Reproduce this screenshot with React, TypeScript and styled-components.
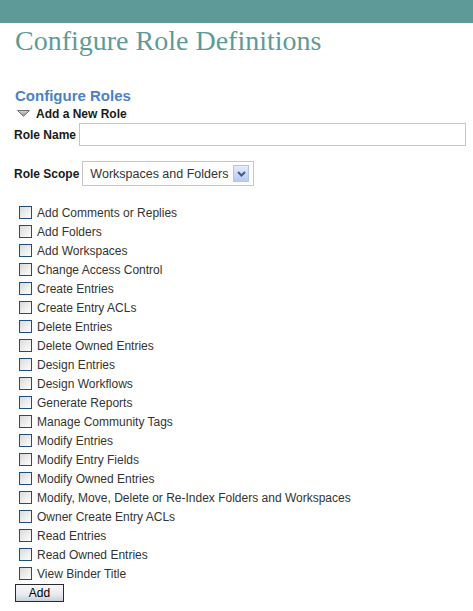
import React from "react";
import styled, { createGlobalStyle } from "styled-components";

const Global = createGlobalStyle`
  html, body { margin: 0; padding: 0; background: #ffffff; }
  body { font-family: "Liberation Sans", Arial, sans-serif; }
`;

const TopBar = styled.div`
  height: 23px;
  background: #5e9b98;
`;

const Content = styled.div`
  padding: 0 7px 0 14px;
`;

const Title = styled.h1`
  margin: 2px 0 0 1px;
  font-family: "Liberation Serif", "Times New Roman", serif;
  font-weight: normal;
  font-size: 28px;
  line-height: 32px;
  color: #5e9b98;
`;

const SectionTitle = styled.h2`
  margin: 29px 0 0 1px;
  font-size: 15px;
  line-height: 20px;
  font-weight: bold;
  color: #4a82c4;
`;

const Toggle = styled.div`
  display: flex;
  align-items: center;
  gap: 6px;
  margin-left: 3px;
  height: 15px;
  font-size: 12px;
  font-weight: bold;
  color: #1a1a1a;
`;

const FieldRow = styled.div<{ $top: number }>`
  display: flex;
  align-items: center;
  gap: 3px;
  margin-top: ${(p) => p.$top}px;
`;

const Label = styled.label`
  font-size: 12px;
  font-weight: bold;
  color: #1a1a1a;
  white-space: nowrap;
`;

const TextInput = styled.input`
  flex: 1;
  box-sizing: border-box;
  height: 23px;
  margin: 0;
  border: 1px solid #c6c6c6;
  padding: 0 4px;
  font-family: "Liberation Sans", Arial, sans-serif;
  font-size: 12px;
  outline: none;
`;

const SelectBox = styled.div`
  box-sizing: border-box;
  width: 172px;
  height: 25px;
  border: 1px solid #c6c6c6;
  display: flex;
  align-items: center;
  justify-content: space-between;
  padding: 0 4px 0 7px;
  font-size: 12.5px;
  color: #333333;
  background: #ffffff;
`;

const ArrowButton = styled.span`
  box-sizing: border-box;
  width: 16px;
  height: 17px;
  border: 1px solid #b3c4ea;
  background: linear-gradient(#e4ecfc, #b6caf4);
  display: flex;
  align-items: center;
  justify-content: center;
`;

const List = styled.div`
  margin-top: 17px;
  display: flex;
  flex-direction: column;
`;

const CheckRow = styled.label`
  display: flex;
  align-items: center;
  gap: 5px;
  height: 19px;
  padding-left: 5px;
  font-size: 12px;
  color: #333333;
  white-space: nowrap;
`;

const Box = styled.span`
  box-sizing: border-box;
  width: 13px;
  height: 13px;
  border: 1px solid #1e4f7f;
  background: linear-gradient(135deg, #d9d9d9 0%, #f0f0f0 60%, #fcfcfc 100%);
  flex: none;
`;

const AddButton = styled.button`
  box-sizing: border-box;
  margin: -1px 0 0 1px;
  width: 49px;
  height: 18px;
  padding: 0;
  border: 1px solid #2a2a2a;
  background: linear-gradient(#f7f8fb, #e6eaf0 60%, #c9d0da);
  font-family: "Liberation Sans", Arial, sans-serif;
  font-size: 12px;
  color: #000000;
  line-height: 16px;
`;

const permissions = [
  "Add Comments or Replies",
  "Add Folders",
  "Add Workspaces",
  "Change Access Control",
  "Create Entries",
  "Create Entry ACLs",
  "Delete Entries",
  "Delete Owned Entries",
  "Design Entries",
  "Design Workflows",
  "Generate Reports",
  "Manage Community Tags",
  "Modify Entries",
  "Modify Entry Fields",
  "Modify Owned Entries",
  "Modify, Move, Delete or Re-Index Folders and Workspaces",
  "Owner Create Entry ACLs",
  "Read Entries",
  "Read Owned Entries",
  "View Binder Title",
];

const Triangle = () => (
  <svg width="13" height="7" viewBox="0 0 13 7">
    <defs>
      <linearGradient id="tri" x1="0" y1="0" x2="0" y2="1">
        <stop offset="0" stopColor="#d6d6d6" />
        <stop offset="1" stopColor="#909090" />
      </linearGradient>
    </defs>
    <polygon points="0.5,0.5 12.5,0.5 6.5,6.3" fill="url(#tri)" stroke="#707070" strokeWidth="1" strokeLinejoin="round" />
  </svg>
);

const Chevron = () => (
  <svg width="9" height="6" viewBox="0 0 9 6">
    <polyline points="1,1 4.5,4.5 8,1" fill="none" stroke="#3f5a8a" strokeWidth="2" />
  </svg>
);

export default function App() {
  return (
    <>
      <Global />
      <TopBar />
      <Content>
        <Title>Configure Role Definitions</Title>
        <SectionTitle>Configure Roles</SectionTitle>
        <Toggle>
          <Triangle />
          <span>Add a New Role</span>
        </Toggle>
        <FieldRow $top={2}>
          <Label>Role Name</Label>
          <TextInput type="text" />
        </FieldRow>
        <FieldRow $top={15}>
          <Label>Role Scope</Label>
          <SelectBox>
            <span>Workspaces and Folders</span>
            <ArrowButton>
              <Chevron />
            </ArrowButton>
          </SelectBox>
        </FieldRow>
        <List>
          {permissions.map((p) => (
            <CheckRow key={p}>
              <Box />
              <span>{p}</span>
            </CheckRow>
          ))}
        </List>
        <AddButton>Add</AddButton>
      </Content>
    </>
  );
}
